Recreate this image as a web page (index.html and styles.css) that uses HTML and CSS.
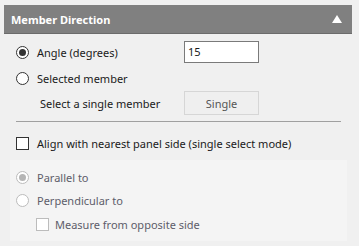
FILE: index.html
```html
<!DOCTYPE html>
<html>
<head>
<meta charset="utf-8">
<link rel="stylesheet" href="styles.css">
</head>
<body>
<div class="panel">
  <div class="header">
    <span class="title">Member Direction</span>
    <svg class="caret" width="10" height="8" viewBox="0 0 10 8"><polygon points="5,0 10,8 0,8" fill="#fff"/></svg>
  </div>
  <div class="content">
    <div class="row r1">
      <div class="opt"><span class="radio checked"></span><span>Angle (degrees)</span></div>
      <div class="input">15</div>
    </div>
    <div class="row r2">
      <div class="opt"><span class="radio"></span><span>Selected member</span></div>
    </div>
    <div class="row r3">
      <div class="sub">Select a single member</div>
      <div class="btn">Single</div>
    </div>
    <div class="sep"></div>
    <div class="row r4">
      <div class="opt"><span class="check"></span><span>Align with nearest panel side (single select mode)</span></div>
    </div>
    <div class="group">
      <div class="opt dis g1"><span class="radio checked"></span><span>Parallel to</span></div>
      <div class="opt dis g2"><span class="radio"></span><span>Perpendicular to</span></div>
      <div class="opt dis g3"><span class="check"></span><span>Measure from opposite side</span></div>
    </div>
  </div>
</div>
</body>
</html>
```
FILE: styles.css
```css
* { box-sizing: border-box; }
body {
  margin: 0;
  background: #f0f0f0;
  font-family: "Noto Sans", "Open Sans", sans-serif;
  font-size: 11px;
  color: #1a1a1a;
  width: 359px;
  height: 246px;
  overflow: hidden;
}
.panel { padding: 5px 7px 0 4px; }
.header {
  height: 29px;
  background: #808080;
  border-bottom: 1px solid #6b6b6b;
  display: flex;
  align-items: center;
  justify-content: space-between;
  padding: 0 10px 0 7px;
}
.title { color: #fff; font-weight: bold; font-size: 11px; }
.caret { display: block; margin-top: -1px; }
.content { padding: 0 6px 0 6px; }
.row { display: flex; align-items: center; }
.r1 { height: 22px; margin-top: 7px; }
.r2 { height: 22px; margin-top: 4px; }
.r3 { height: 24px; margin-top: 2px; }
.r4 { height: 22px; margin-top: 10px; }
.opt { display: flex; align-items: center; gap: 8px; padding-left: 6px; }
.r1 .opt { width: 174px; }
.radio {
  width: 13px; height: 13px;
  border: 1px solid #333;
  border-radius: 50%;
  background: #fff;
  display: flex; align-items: center; justify-content: center;
  flex: none;
}
.radio.checked::after {
  content: ""; width: 7px; height: 7px; border-radius: 50%; background: #333;
}
.check {
  width: 13px; height: 13px;
  border: 1px solid #333;
  background: #fff;
  flex: none;
}
.input {
  width: 75px; height: 22px;
  border: 1px solid #7a7a7a;
  background: #fff;
  padding-left: 3px;
  line-height: 20px;
}
.sub { width: 174px; padding-left: 30px; }
.btn {
  width: 75px; height: 24px;
  border: 1px solid #d6d6d6;
  background: #efefef;
  color: #555;
  display: flex; align-items: center; justify-content: center;
}
.sep { height: 1px; background: #a0a0a0; margin: 6px 0 0 6px; width: 325px; }
.group {
  margin-top: 6px;
  background: #f4f4f4;
  height: 81px;
  width: 337px;
  padding-top: 11px;
}
.group .opt { height: 12px; color: #5d5d6a; }
.dis .radio, .dis .check { border-color: #bcbcbc; background: #fff; }
.dis .radio.checked::after { background: #b5b5b5; }
.g2 { margin-top: 11px; }
.g3 { margin-top: 12px; padding-left: 26px; gap: 6px; }
```
